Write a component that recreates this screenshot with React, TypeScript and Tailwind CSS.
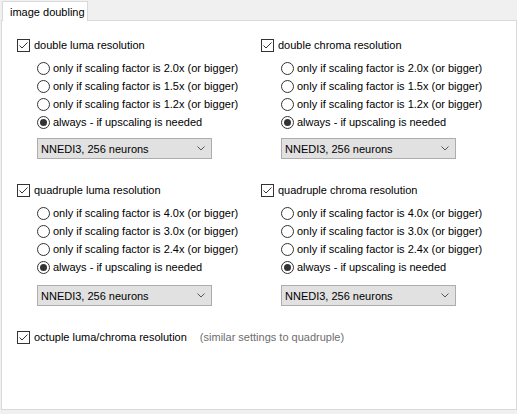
import React from 'react';

const font = { fontFamily: '"Liberation Sans", Arial, sans-serif' };

const CheckBox: React.FC<{ label: string }> = ({ label }) => (
    <div className="flex items-center h-[18px] whitespace-nowrap">
        <svg width="13" height="13" viewBox="0 0 13 13" className="shrink-0">
            <rect x="0.5" y="0.5" width="12" height="12" fill="#fff" stroke="#333" />
            <path d="M2.5 6.5 L5 9 L10.5 3.5" fill="none" stroke="#333" strokeWidth="1" />
        </svg>
        <span className="ml-[4px] text-[#000]">{label}</span>
    </div>
);

const Radio: React.FC<{ label: string; checked?: boolean }> = ({ label, checked }) => (
    <div className="flex items-center h-[18px] whitespace-nowrap">
        <span className="w-[13px] h-[13px] rounded-full border border-[#333] bg-white flex items-center justify-center shrink-0">
            {checked && <span className="w-[7px] h-[7px] rounded-full bg-[#333]"></span>}
        </span>
        <span className="ml-[3px] text-[#000]">{label}</span>
    </div>
);

const Dropdown: React.FC = () => (
    <div className="w-[175px] h-[21px] bg-[#e1e1e1] border border-[#adadad] flex items-center justify-between pl-[3px] pr-[6px] whitespace-nowrap">
        <span className="text-[#000]">NNEDI3, 256 neurons</span>
        <svg width="8" height="5" viewBox="0 0 8 5">
            <path d="M0.5 0.5 L4 4 L7.5 0.5" fill="none" stroke="#555" strokeWidth="1" />
        </svg>
    </div>
);

interface GroupProps {
    title: string;
    factors: string[];
    dropdownGap: string;
}

const Group: React.FC<GroupProps> = ({ title, factors, dropdownGap }) => (
    <div className="flex flex-col">
        <CheckBox label={title} />
        <div className="flex flex-col pl-[20px] mt-[5px]">
            {factors.map((f) => (
                <Radio key={f} label={`only if scaling factor is ${f}x (or bigger)`} />
            ))}
            <Radio label="always - if upscaling is needed" checked />
            <div className={dropdownGap}>
                <Dropdown />
            </div>
        </div>
    </div>
);

export default function App() {
    return (
        <div className="w-[517px] h-[414px] bg-[#f0f0f0] text-[11px] leading-[18px] relative overflow-hidden" style={font}>
            <div className="flex pl-[2px] pt-[1px] relative z-10">
                <div className="h-[20px] w-[86px] bg-white border border-b-0 border-[#d9d9d9] flex items-center pl-[7px] whitespace-nowrap">
                    image doubling
                </div>
            </div>
            <div className="ml-[1px] -mt-[1px] w-[516px] h-[390px] bg-white border border-[#d9d9d9] pl-[15px] pt-[15px]">
                <div className="grid grid-cols-[244px_244px]">
                    <Group title="double luma resolution" factors={['2.0', '1.5', '1.2']} dropdownGap="mt-[7px]" />
                    <Group title="double chroma resolution" factors={['2.0', '1.5', '1.2']} dropdownGap="mt-[7px]" />
                </div>
                <div className="grid grid-cols-[244px_244px] mt-[22px]">
                    <Group title="quadruple luma resolution" factors={['4.0', '3.0', '2.4']} dropdownGap="mt-[9px]" />
                    <Group title="quadruple chroma resolution" factors={['4.0', '3.0', '2.4']} dropdownGap="mt-[9px]" />
                </div>
                <div className="flex items-center mt-[22px] whitespace-nowrap">
                    <CheckBox label="octuple luma/chroma resolution" />
                    <span className="ml-[13px] text-[#6d6d6d]">(similar settings to quadruple)</span>
                </div>
            </div>
        </div>
    );
}
